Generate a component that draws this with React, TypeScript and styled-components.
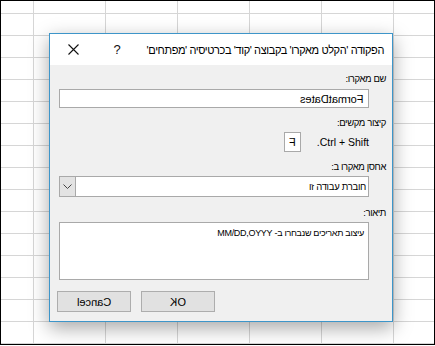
import styled, { createGlobalStyle } from "styled-components";

const Global = createGlobalStyle`
  html, body {
    margin: 0;
    padding: 0;
    background: #ffffff;
  }
  body {
    font-family: "Liberation Sans", "DejaVu Sans", sans-serif;
  }
`;

const Sheet = styled.div`
  box-sizing: border-box;
  width: 435px;
  height: 345px;
  border: 1px solid #000;
  overflow: hidden;
  padding: 32px 0 0 48px;
  background-color: #ffffff;
  background-image: linear-gradient(to right, #d6d6d6 1px, transparent 1px),
    linear-gradient(to bottom, #d6d6d6 1px, transparent 1px);
  background-size: 72px 22px;
  background-position: 32px 12px;
`;

const Dialog = styled.div`
  box-sizing: border-box;
  width: 344px;
  height: 289px;
  border: 1px solid #3d95c9;
  background: #f0f0f0;
  box-shadow: 0 6px 18px rgba(0, 0, 0, 0.35);
  display: flex;
  flex-direction: column;
`;

const TitleBar = styled.div`
  height: 31px;
  background: #ffffff;
  display: flex;
  align-items: center;
`;

const TitleButton = styled.div<{ $w: number }>`
  flex-shrink: 0;
  width: ${(p) => p.$w}px;
  height: 31px;
  display: flex;
  align-items: center;
  justify-content: center;
  font-size: 13px;
  color: #111;
`;

const Title = styled.div`
  flex: 1;
  min-width: 0;
  direction: rtl;
  text-align: right;
  padding-right: 8px;
  font-size: 11px;
  letter-spacing: -0.4px;
  color: #000;
  white-space: nowrap;
  overflow: hidden;
`;

const Body = styled.div`
  flex: 1;
  direction: rtl;
  padding: 7px 6px 0 7px;
  display: flex;
  flex-direction: column;
`;

const Label = styled.div<{ $top: number }>`
  font-size: 9.5px;
  letter-spacing: -0.4px;
  line-height: 14px;
  color: #000;
  margin-top: ${(p) => p.$top}px;
`;

const Box = styled.div<{ $h: number; $top: number }>`
  box-sizing: border-box;
  width: 310px;
  height: ${(p) => p.$h}px;
  margin-right: 17px;
  margin-top: ${(p) => p.$top}px;
  border: 1px solid #a9a9a9;
  background: #ffffff;
  font-size: 11px;
  color: #000;
  display: flex;
  align-items: center;
  padding-right: 4px;
`;

const Memo = styled(Box)`
  align-items: flex-start;
  padding: 4px 4px 0 0;
  font-size: 9px;
  letter-spacing: -0.3px;
  line-height: 12px;
`;

const Combo = styled(Box)`
  padding: 0;
  justify-content: space-between;
  font-size: 9.5px;
  letter-spacing: -0.3px;
`;

const ComboText = styled.span`
  padding-right: 2px;
`;

const ComboArrow = styled.div`
  box-sizing: border-box;
  width: 17px;
  height: 21px;
  margin: -1px;
  border: 1px solid #a9a9a9;
  background: #e3e3e3;
  display: flex;
  align-items: center;
  justify-content: center;
`;

const ShortcutRow = styled.div`
  display: flex;
  align-items: center;
  gap: 16px;
  margin-top: 2px;
  margin-right: 17px;
  font-size: 10.5px;
  color: #000;
`;

const KeyBox = styled.div`
  box-sizing: border-box;
  width: 17px;
  height: 20px;
  border: 1px solid #a9a9a9;
  background: #fff;
  display: flex;
  align-items: center;
  justify-content: center;
  font-size: 11px;
`;

const Mirrored = styled.span`
  display: inline-block;
  transform: scaleX(-1);
`;

const Buttons = styled.div`
  display: flex;
  justify-content: flex-end;
  gap: 10px;
  margin-top: 11px;
`;

const Button = styled.div`
  box-sizing: border-box;
  width: 74px;
  height: 21px;
  border: 1px solid #adadad;
  background: #e1e1e1;
  display: flex;
  align-items: center;
  justify-content: center;
  font-size: 11px;
  color: #000;
`;

function App() {
  return (
    <>
      <Global />
      <Sheet>
        <Dialog>
          <TitleBar>
            <TitleButton $w={46}>
              <svg width="11" height="11" viewBox="0 0 11 11">
                <path d="M0.5 0.5 L10.5 10.5 M10.5 0.5 L0.5 10.5" stroke="#111" strokeWidth="1.1" />
              </svg>
            </TitleButton>
            <TitleButton $w={42}>?</TitleButton>
            <Title>הפקודה 'הקלט מאקרו' בקבוצה 'קוד' בכרטיסיה 'מפתחים'</Title>
          </TitleBar>
          <Body>
            <Label $top={0}>שם מאקרו:</Label>
            <Box $h={19} $top={3}>
              <Mirrored>FormatDates</Mirrored>
            </Box>
            <Label $top={8}>קיצור מקשים:</Label>
            <ShortcutRow>
              <span>Ctrl + Shift.</span>
              <KeyBox>
                <Mirrored>F</Mirrored>
              </KeyBox>
            </ShortcutRow>
            <Label $top={8}>אחסן מאקרו ב:</Label>
            <Combo $h={21} $top={2}>
              <ComboText>חוברת עבודה זו</ComboText>
              <ComboArrow>
                <svg width="9" height="5" viewBox="0 0 9 5">
                  <path d="M0.5 0.5 L4.5 4.5 L8.5 0.5" stroke="#444" strokeWidth="1" fill="none" />
                </svg>
              </ComboArrow>
            </Combo>
            <Label $top={9}>תיאור:</Label>
            <Memo $h={58} $top={2}>
              עיצוב תאריכים שנבחרו ב- MM/DD,OYYY
            </Memo>
            <Buttons>
              <Button>
                <Mirrored>OK</Mirrored>
              </Button>
              <Button>
                <Mirrored>Cancel</Mirrored>
              </Button>
            </Buttons>
          </Body>
        </Dialog>
      </Sheet>
    </>
  );
}

export default App;
